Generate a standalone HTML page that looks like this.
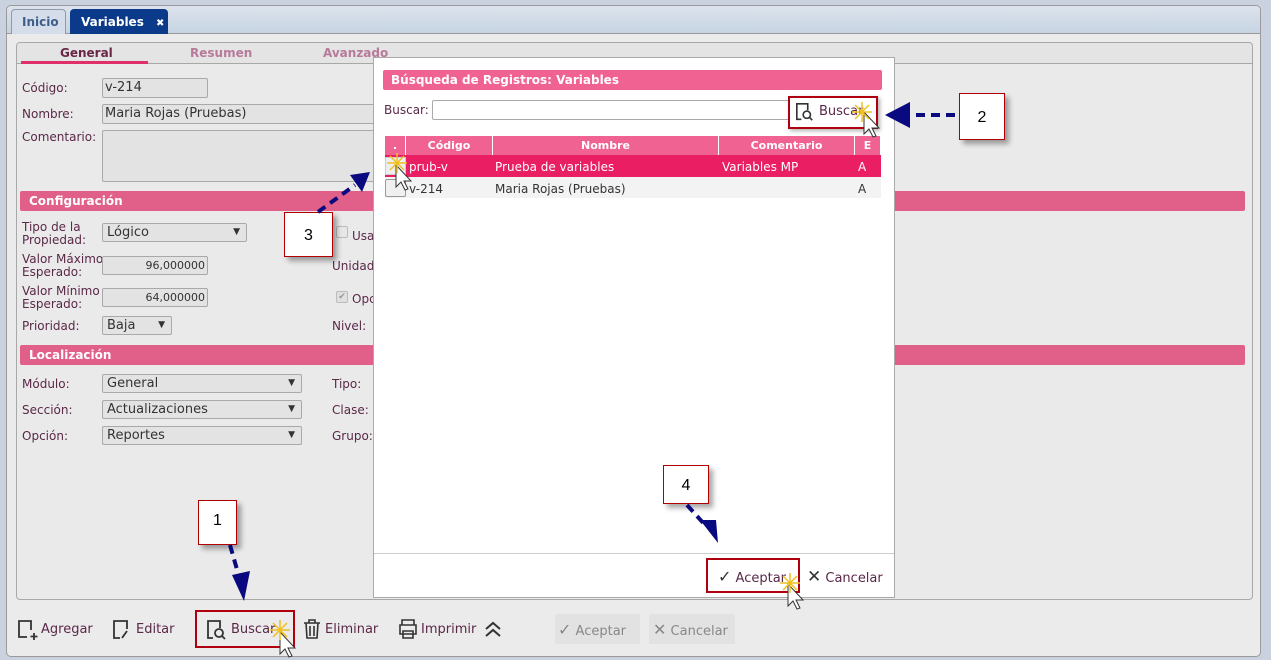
<!DOCTYPE html>
<html><head><meta charset="utf-8"><style>
*{box-sizing:border-box;margin:0;padding:0}
body{width:1271px;height:660px;background:#c9d2de;font-family:"DejaVu Sans","Liberation Sans",sans-serif;font-size:12px;color:#5a2848;position:relative;overflow:hidden}
.a{position:absolute}
.frame{left:6px;top:5px;width:1255px;height:652px;background:#ebebeb;border:1px solid #9a9a9a;border-radius:5px}
.tabstrip{left:7px;top:6px;width:1253px;height:28px;background:linear-gradient(#dde3ec,#c6d4e2);border-bottom:1px solid #9a9a9a;border-radius:5px 5px 0 0}
.tab{top:9px;height:25px;border:1px solid #8d9bb0;border-bottom:none;border-radius:4px 4px 0 0;font-weight:bold;font-size:12px;line-height:24px;padding-left:10px;white-space:nowrap}
.panel{left:16px;top:42px;width:1237px;height:558px;border:1px solid #a8a8a8;border-radius:4px;background:#eaeaea}
.phead{left:17px;top:43px;width:1235px;height:21px;background:#e4e4e4;border-bottom:1px solid #a8a8a8;border-radius:4px 4px 0 0}
.lbl{color:#5a2848;font-size:12px;line-height:13px}
.inp{background:#e3e3e3;border:1px solid #a9a9a9;border-radius:2px;font-size:13px;color:#333;padding-left:2px;line-height:18px}
.sel{background:#e3e3e3;border:1px solid #a9a9a9;border-radius:2px;font-size:13px;color:#333;padding-left:4px;line-height:17px}
.sel:after{content:"▼";position:absolute;right:6px;top:0;font-size:9px;color:#333}
.bar{left:20px;width:1225px;height:20px;background:#e0608a;border-radius:2px;color:#fff;font-weight:bold;font-size:12px;line-height:20px;padding-left:9px}
.modal{left:373px;top:57px;width:522px;height:541px;background:#fff;border:1px solid #aaa}
.th{top:136px;height:19px;background:#f06292;color:#fff;font-weight:bold;font-size:11px;line-height:19px;text-align:center;border-right:1px solid #fff}
.call{background:#fff;border:1px solid #b00000;font-family:"Liberation Sans",sans-serif;font-size:16px;color:#000;text-align:center;box-shadow:4px 4px 5px rgba(0,0,0,.35)}
.red{border:2px solid #b00010}
.btn{font-size:13px;color:#5a2848;line-height:18px}
</style></head><body>
<div class="a frame"></div>
<div class="a tabstrip"></div>
<div class="a tab" style="left:11px;width:55px;background:#d4dde9;color:#3d5f8a">Inicio</div>
<div class="a tab" style="left:70px;width:98px;background:#0b3a8a;color:#fff;border-color:#0b3a8a">Variables <span style="margin-left:8px;font-size:10px">✖</span></div>
<div class="a panel"></div>
<div class="a phead"></div>
<div class="a" style="left:60px;top:46px;font-weight:bold;color:#6b2545">General</div>
<div class="a" style="left:21px;top:61px;width:127px;height:3px;background:#e0306a"></div>
<div class="a" style="left:190px;top:46px;font-weight:bold;color:#b77a9a">Resumen</div>
<div class="a" style="left:323px;top:46px;font-weight:bold;color:#b77a9a">Avanzado</div>

<div class="a lbl" style="left:22px;top:82px">Código:</div>
<div class="a inp" style="left:102px;top:78px;width:106px;height:20px">v-214</div>
<div class="a lbl" style="left:22px;top:108px">Nombre:</div>
<div class="a inp" style="left:102px;top:104px;width:280px;height:20px">Maria Rojas (Pruebas)</div>
<div class="a lbl" style="left:22px;top:131px">Comentario:</div>
<div class="a inp" style="left:102px;top:130px;width:280px;height:52px"></div>

<div class="a bar" style="top:191px">Configuración</div>
<div class="a lbl" style="left:22px;top:221px">Tipo de la<br>Propiedad:</div>
<div class="a sel" style="left:102px;top:223px;width:145px;height:19px">Lógico</div>
<div class="a lbl" style="left:22px;top:253px">Valor Máximo<br>Esperado:</div>
<div class="a inp" style="left:102px;top:256px;width:106px;height:19px;text-align:right;font-size:11px;padding-right:2px">96,000000</div>
<div class="a lbl" style="left:22px;top:285px">Valor Mínimo<br>Esperado:</div>
<div class="a inp" style="left:102px;top:288px;width:106px;height:19px;text-align:right;font-size:11px;padding-right:2px">64,000000</div>
<div class="a lbl" style="left:22px;top:320px">Prioridad:</div>
<div class="a sel" style="left:102px;top:316px;width:70px;height:19px">Baja</div>
<div class="a" style="left:336px;top:226px;width:12px;height:12px;border:1px solid #bbb;border-radius:2px;background:#e8e8e8"></div>
<div class="a lbl" style="left:352px;top:230px">Usa</div>
<div class="a lbl" style="left:332px;top:260px">Unidad</div>
<div class="a" style="left:336px;top:291px;width:12px;height:12px;border:1px solid #bbb;border-radius:2px;background:#e0e0e0;font-size:9px;color:#999;line-height:10px;text-align:center">✔</div>
<div class="a lbl" style="left:352px;top:293px">Opc</div>
<div class="a lbl" style="left:332px;top:320px">Nivel:</div>

<div class="a bar" style="top:345px">Localización</div>
<div class="a lbl" style="left:22px;top:378px">Módulo:</div>
<div class="a sel" style="left:102px;top:374px;width:200px;height:19px">General</div>
<div class="a lbl" style="left:22px;top:404px">Sección:</div>
<div class="a sel" style="left:102px;top:400px;width:200px;height:19px">Actualizaciones</div>
<div class="a lbl" style="left:22px;top:430px">Opción:</div>
<div class="a sel" style="left:102px;top:426px;width:200px;height:19px">Reportes</div>
<div class="a lbl" style="left:332px;top:378px">Tipo:</div>
<div class="a lbl" style="left:332px;top:404px">Clase:</div>
<div class="a lbl" style="left:332px;top:430px">Grupo:</div>

<svg class="a" style="left:16px;top:619px" width="22" height="22" viewBox="0 0 22 22" fill="none" stroke="#333" stroke-width="1.8"><path d="M11 18H3V2h12v9"/><path d="M18 14v7M14.5 17.5h7"/></svg>
<div class="a btn" style="left:41px;top:621px">Agregar</div>
<svg class="a" style="left:112px;top:619px" width="22" height="22" viewBox="0 0 22 22" fill="none" stroke="#333" stroke-width="1.8"><path d="M8 19H2V2h13v8"/><path d="M15 12l-5 7"/></svg>
<div class="a btn" style="left:136px;top:621px">Editar</div>
<div class="a red" style="left:195px;top:610px;width:100px;height:38px"></div>
<svg class="a" style="left:206px;top:619px" width="22" height="22" viewBox="0 0 22 22" fill="none" stroke="#333" stroke-width="1.8"><path d="M7 19H2V2h12v7"/><circle cx="13" cy="14" r="4"/><path d="M16 17l3 3"/></svg>
<div class="a btn" style="left:231px;top:621px">Buscar</div>
<svg class="a" style="left:302px;top:618px" width="20" height="22" viewBox="0 0 20 22" fill="none" stroke="#333" stroke-width="1.6"><path d="M2 5h16M7 5V2h6v3M4 5l1 15h10l1-15M8 8v10M12 8v10"/></svg>
<div class="a btn" style="left:325px;top:621px">Eliminar</div>
<svg class="a" style="left:397px;top:618px" width="22" height="22" viewBox="0 0 22 22" fill="none" stroke="#333" stroke-width="1.6"><path d="M5 7V2h12v5M3 7h16v9H3zM6 13h10v7H6z"/></svg>
<div class="a btn" style="left:421px;top:621px">Imprimir</div>
<svg class="a" style="left:483px;top:619px" width="20" height="20" viewBox="0 0 20 20" fill="none" stroke="#333" stroke-width="2"><path d="M3 10l7-6 7 6M3 17l7-6 7 6"/></svg>
<div class="a" style="left:555px;top:614px;width:85px;height:30px;background:#e2e2e2;border-radius:2px"></div>
<div class="a btn" style="left:558px;top:621px;color:#888"><span style="font-size:16px">✓</span> Aceptar</div>
<div class="a" style="left:649px;top:614px;width:86px;height:30px;background:#e2e2e2;border-radius:2px"></div>
<div class="a btn" style="left:653px;top:621px;color:#888"><span style="font-size:16px">✕</span> Cancelar</div>

<div class="a modal"></div>
<div class="a" style="left:383px;top:70px;width:499px;height:20px;background:#f06292;border-radius:2px;color:#fff;font-weight:bold;font-size:12px;line-height:20px;padding-left:8px">Búsqueda de Registros: Variables</div>
<div class="a lbl" style="left:384px;top:104px">Buscar:</div>
<div class="a" style="left:432px;top:100px;width:380px;height:20px;border:1px solid #aaa;border-radius:2px"></div>
<div class="a" style="left:788px;top:96px;width:90px;height:33px;border:2px solid #b00010;background:#fff;box-shadow:2px 2px 4px rgba(0,0,0,.3)"></div>
<svg class="a" style="left:795px;top:102px" width="20" height="20" viewBox="0 0 22 22" fill="none" stroke="#333" stroke-width="1.8"><path d="M7 19H2V2h12v7"/><circle cx="13" cy="14" r="4"/><path d="M16 17l3 3"/></svg>
<div class="a btn" style="left:819px;top:103px">Buscar</div>
<div class="a th" style="left:385px;width:21px">.</div>
<div class="a th" style="left:406px;width:87px">Código</div>
<div class="a th" style="left:493px;width:226px">Nombre</div>
<div class="a th" style="left:719px;width:136px">Comentario</div>
<div class="a th" style="left:855px;width:26px">E</div>
<div class="a" style="left:385px;top:155px;width:496px;height:22px;background:#e91e63"></div>
<div class="a" style="left:385px;top:177px;width:496px;height:21px;background:#f3f3f3"></div>
<div class="a" style="left:385px;top:157px;width:21px;height:18px;border:1px solid #ccc;background:#eee"></div>
<div class="a" style="left:385px;top:179px;width:21px;height:18px;border:1px solid #999;background:#f0f0f0;border-radius:2px"></div>
<div class="a" style="left:409px;top:160px;color:#fff;font-size:12px">prub-v</div>
<div class="a" style="left:495px;top:160px;color:#fff;font-size:12px">Prueba de variables</div>
<div class="a" style="left:722px;top:160px;color:#fff;font-size:12px">Variables MP</div>
<div class="a" style="left:858px;top:160px;color:#fff;font-size:12px">A</div>
<div class="a" style="left:409px;top:182px;color:#333;font-size:12px">v-214</div>
<div class="a" style="left:495px;top:182px;color:#333;font-size:12px">Maria Rojas (Pruebas)</div>
<div class="a" style="left:858px;top:182px;color:#333;font-size:12px">A</div>
<div class="a" style="left:374px;top:553px;width:520px;height:1px;background:#ccc"></div>
<div class="a" style="left:706px;top:558px;width:94px;height:35px;border:2px solid #b00010"></div>
<div class="a btn" style="left:718px;top:568px"><span style="font-size:16px;color:#333">✓</span> Aceptar</div>
<div class="a btn" style="left:807px;top:568px"><span style="font-size:17px;color:#333">✕</span> Cancelar</div>

<div class="a call" style="left:198px;top:500px;width:39px;height:45px;line-height:40px">1</div>
<div class="a call" style="left:959px;top:93px;width:46px;height:47px;line-height:47px">2</div>
<div class="a call" style="left:284px;top:212px;width:49px;height:45px;line-height:45px">3</div>
<div class="a call" style="left:663px;top:465px;width:46px;height:39px;line-height:39px">4</div>
<svg class="a" style="left:0;top:0" width="1271" height="660" fill="none">
<g stroke="#0a0a80" stroke-width="4" stroke-dasharray="9,6">
<path d="M230 545L240 580"/><path d="M955 115H905"/><path d="M318 212L355 185"/><path d="M687 505L705 525"/>
</g>
<g fill="#0a0a80">
<path d="M232 575l18-4-6 30z"/><path d="M910 102v26l-25-13z"/><path d="M350 175l20-3-8 20z"/><path d="M700 520l16 0 2 23z"/>
</g>
<g fill="#fff" stroke="#333" stroke-width="1">
<path d="M280 632v22l5-5 4 8 3-1-4-8 7 0z"/><path d="M864 112v22l5-5 4 8 3-1-4-8 7 0z"/><path d="M396 165v22l5-5 4 8 3-1-4-8 7 0z"/><path d="M788 584v22l5-5 4 8 3-1-4-8 7 0z"/>
</g>
<g stroke="#f0c020" stroke-width="1.5">
<path d="M270 630h20M280 620v20M273 623l14 14M287 623l-14 14"/>
<path d="M852 112h20M862 102v20M855 105l14 14M869 105l-14 14"/>
<path d="M387 163h20M397 153v20M390 156l14 14M404 156l-14 14"/>
<path d="M780 583h20M790 573v20M783 576l14 14M797 576l-14 14"/>
</g>
</svg>
</body></html>
